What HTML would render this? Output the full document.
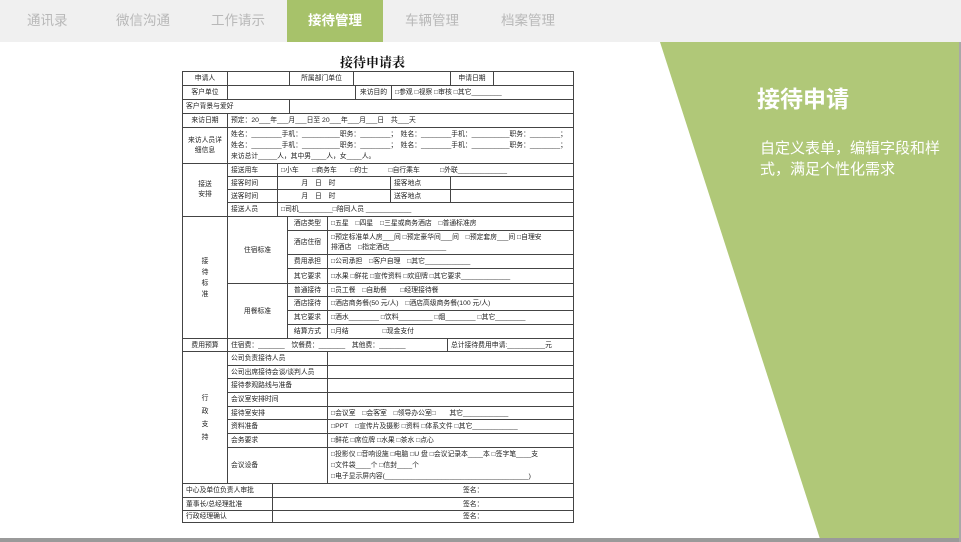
<!DOCTYPE html>
<html><head><meta charset="utf-8"><style>
*{margin:0;padding:0;box-sizing:border-box}
body{width:961px;height:542px;overflow:hidden;background:#fff;position:relative;font-family:"Liberation Sans","Noto Sans CJK SC",sans-serif}
.bar{position:absolute;left:0;top:0;width:961px;height:42px;background:#f0f0f0}
.tab{position:absolute;top:0;height:42px;line-height:42px;font-size:13.5px;color:#b8b8b8}
.act{background:#a7c26a;color:#fff;font-weight:bold;text-align:center;width:96px;left:287px}
.green{position:absolute;left:0;top:0}
.t{position:absolute;border:1px solid #444;font-size:6.8px;line-height:7px;color:#222;display:flex;align-items:center;padding-left:3px;white-space:nowrap;overflow:hidden}
.ctr{justify-content:center;padding-left:0;text-align:center}
.col{flex-direction:column;align-items:flex-start;justify-content:center}
</style></head><body>
<div class="bar"></div>
<div class="tab" style="left:27px">通讯录</div>
<div class="tab" style="left:116px">微信沟通</div>
<div class="tab" style="left:211px">工作请示</div>
<div class="tab act">接待管理</div>
<div class="tab" style="left:405px">车辆管理</div>
<div class="tab" style="left:501px">档案管理</div>
<svg class="green" width="961" height="542"><polygon points="660,42 960,42 960,539 820,539" fill="#b0c878"/><rect x="0" y="538" width="961" height="4" fill="#9a9a9a"/><rect x="959" y="42" width="2" height="500" fill="#a8a8a8"/></svg>
<div style="position:absolute;left:757px;top:80px;font-size:23px;font-weight:bold;color:#fff;font-family:'Liberation Sans','Noto Sans CJK SC',sans-serif">接待申请</div>
<div style="position:absolute;left:760px;top:138px;width:200px;font-size:15px;line-height:21px;color:#fff">自定义表单，编辑字段和样式，满足个性化需求</div>
<div style="position:absolute;left:340px;top:52px;font-size:13px;font-weight:bold;font-family:'Liberation Serif','Noto Serif CJK SC',serif;color:#111">接待申请表</div>

<div class="t ctr" style="left:182px;top:71px;width:46px;height:15px">申请人</div>
<div class="t" style="left:227px;top:71px;width:63px;height:15px"></div>
<div class="t ctr" style="left:289px;top:71px;width:65px;height:15px">所属部门单位</div>
<div class="t" style="left:353px;top:71px;width:98px;height:15px"></div>
<div class="t ctr" style="left:450px;top:71px;width:44px;height:15px">申请日期</div>
<div class="t" style="left:493px;top:71px;width:81px;height:15px"></div>

<div class="t ctr" style="left:182px;top:85px;width:46px;height:15px">客户单位</div>
<div class="t" style="left:227px;top:85px;width:129px;height:15px"></div>
<div class="t ctr" style="left:355px;top:85px;width:37px;height:15px">来访目的</div>
<div class="t" style="left:391px;top:85px;width:183px;height:15px">□参观 □视察 □审核 □其它________</div>

<div class="t" style="left:182px;top:99px;width:108px;height:15px">客户背景与爱好</div>
<div class="t" style="left:289px;top:99px;width:285px;height:15px"></div>

<div class="t ctr" style="left:182px;top:113px;width:46px;height:15px">来访日期</div>
<div class="t" style="left:227px;top:113px;width:347px;height:15px">预定：20___年___月___日至 20___年___月___日　共___天</div>

<div class="t ctr" style="left:182px;top:127px;width:46px;height:37px;white-space:normal;line-height:10px">来访人员详<br>细信息</div>
<div class="t col" style="left:227px;top:127px;width:347px;height:37px;line-height:11px">
<div>姓名：________手机：__________职务：________；　姓名：________手机：__________职务：________；</div>
<div>姓名：________手机：__________职务：________；　姓名：________手机：__________职务：________；</div>
<div>来访总计_____人，其中男____人，女____人。</div></div>

<div class="t ctr" style="left:182px;top:163px;width:46px;height:54px;line-height:10px">接送<br>安排</div>
<div class="t" style="left:227px;top:163px;width:51px;height:14px">接送用车</div>
<div class="t" style="left:277px;top:163px;width:297px;height:14px">□小车　　□商务车　　□的士　　　□自行乘车　　　□外联_____________</div>
<div class="t" style="left:227px;top:176px;width:51px;height:14px">接客时间</div>
<div class="t" style="left:277px;top:176px;width:114px;height:14px">　　　月　日　时</div>
<div class="t" style="left:390px;top:176px;width:61px;height:14px">接客地点</div>
<div class="t" style="left:450px;top:176px;width:124px;height:14px"></div>
<div class="t" style="left:227px;top:189px;width:51px;height:14px">送客时间</div>
<div class="t" style="left:277px;top:189px;width:114px;height:14px">　　　月　日　时</div>
<div class="t" style="left:390px;top:189px;width:61px;height:14px">送客地点</div>
<div class="t" style="left:450px;top:189px;width:124px;height:14px"></div>
<div class="t" style="left:227px;top:202px;width:51px;height:15px">接送人员</div>
<div class="t" style="left:277px;top:202px;width:297px;height:15px">□司机_________□陪同人员 ____________</div>

<div class="t ctr" style="left:182px;top:216px;width:46px;height:123px;line-height:11px">接<br>待<br>标<br>准</div>
<div class="t ctr" style="left:227px;top:216px;width:61px;height:68px">住宿标准</div>
<div class="t ctr" style="left:287px;top:216px;width:41px;height:15px">酒店类型</div>
<div class="t" style="left:327px;top:216px;width:247px;height:15px">□五星　□四星　□三星或商务酒店　□普通标准房</div>
<div class="t ctr" style="left:287px;top:230px;width:41px;height:25px">酒店住宿</div>
<div class="t col" style="left:327px;top:230px;width:247px;height:25px;line-height:10px"><div>□预定标准单人房___间 □预定豪华间___间　□预定套房___间 □自理安</div><div>排酒店　□指定酒店_______________</div></div>
<div class="t ctr" style="left:287px;top:254px;width:41px;height:15px">费用承担</div>
<div class="t" style="left:327px;top:254px;width:247px;height:15px">□公司承担　□客户自理　□其它____________</div>
<div class="t ctr" style="left:287px;top:268px;width:41px;height:16px">其它要求</div>
<div class="t" style="left:327px;top:268px;width:247px;height:16px">□水果 □鲜花 □宣传资料 □欢迎牌 □其它要求_____________</div>
<div class="t ctr" style="left:227px;top:283px;width:61px;height:56px">用餐标准</div>
<div class="t ctr" style="left:287px;top:283px;width:41px;height:14px">普通接待</div>
<div class="t" style="left:327px;top:283px;width:247px;height:14px">□员工餐　□自助餐　　□经理接待餐</div>
<div class="t ctr" style="left:287px;top:296px;width:41px;height:15px">酒店接待</div>
<div class="t" style="left:327px;top:296px;width:247px;height:15px">□酒店商务餐(50 元/人)　□酒店高级商务餐(100 元/人)</div>
<div class="t ctr" style="left:287px;top:310px;width:41px;height:15px">其它要求</div>
<div class="t" style="left:327px;top:310px;width:247px;height:15px">□酒水________ □饮料_________ □烟________ □其它________</div>
<div class="t ctr" style="left:287px;top:324px;width:41px;height:15px">结算方式</div>
<div class="t" style="left:327px;top:324px;width:247px;height:15px">□月结　　　　　□现金支付</div>

<div class="t ctr" style="left:182px;top:338px;width:46px;height:14px">费用预算</div>
<div class="t" style="left:227px;top:338px;width:221px;height:14px">住宿费：_______　饮餐费：_______　其他费：_______</div>
<div class="t" style="left:447px;top:338px;width:127px;height:14px">总计接待费用申请:__________元</div>

<div class="t ctr" style="left:182px;top:351px;width:46px;height:133px;line-height:13px">行<br>政<br>支<br>持</div>
<div class="t" style="left:227px;top:351px;width:101px;height:15px">公司负责接待人员</div>
<div class="t" style="left:327px;top:351px;width:247px;height:15px"></div>
<div class="t" style="left:227px;top:365px;width:101px;height:14px">公司出席接待会谈/谈判人员</div>
<div class="t" style="left:327px;top:365px;width:247px;height:14px"></div>
<div class="t" style="left:227px;top:378px;width:101px;height:15px">接待参观路线与准备</div>
<div class="t" style="left:327px;top:378px;width:247px;height:15px"></div>
<div class="t" style="left:227px;top:392px;width:101px;height:15px">会议室安排时间</div>
<div class="t" style="left:327px;top:392px;width:247px;height:15px"></div>
<div class="t" style="left:227px;top:406px;width:101px;height:14px">接待室安排</div>
<div class="t" style="left:327px;top:406px;width:247px;height:14px">□会议室　□会客室　□领导办公室□　　其它____________</div>
<div class="t" style="left:227px;top:419px;width:101px;height:15px">资料准备</div>
<div class="t" style="left:327px;top:419px;width:247px;height:15px">□PPT　□宣传片及摄影 □资料 □体系文件 □其它____________</div>
<div class="t" style="left:227px;top:433px;width:101px;height:15px">会务要求</div>
<div class="t" style="left:327px;top:433px;width:247px;height:15px">□鲜花 □席位牌 □水果 □茶水 □点心</div>
<div class="t" style="left:227px;top:447px;width:101px;height:37px">会议设备</div>
<div class="t col" style="left:327px;top:447px;width:247px;height:37px;line-height:11px"><div>□投影仪 □音响设施 □电脑 □U 盘 □会议记录本____本 □签字笔____支</div><div>□文件袋____个 □信封____个</div><div>□电子显示屏内容(______________________________________)</div></div>

<div class="t" style="left:182px;top:483px;width:91px;height:15px">中心及单位负责人审批</div>
<div class="t" style="left:272px;top:483px;width:302px;height:15px;padding-left:190px">签名：</div>
<div class="t" style="left:182px;top:497px;width:91px;height:14px">董事长/总经理批准</div>
<div class="t" style="left:272px;top:497px;width:302px;height:14px;padding-left:190px">签名：</div>
<div class="t" style="left:182px;top:510px;width:91px;height:13px">行政经理确认</div>
<div class="t" style="left:272px;top:510px;width:302px;height:13px;padding-left:190px">签名：</div>
</body></html>
